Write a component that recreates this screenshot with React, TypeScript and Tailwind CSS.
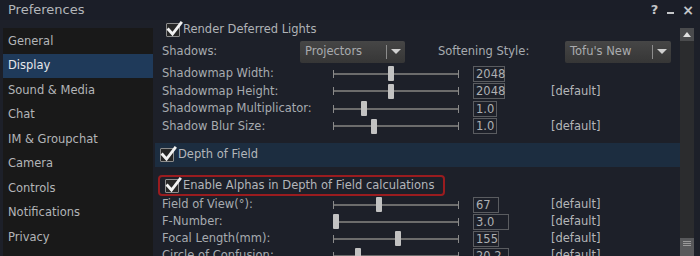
import React from "react";

const font = { fontFamily: '"DejaVu Sans", "Liberation Sans", sans-serif' };

function Check({ className = "" }: { className?: string }) {
  return (
    <span className={"relative inline-block w-[14px] h-[14px] shrink-0 " + className}>
      <span className="absolute inset-0 border border-[#8c8c8c] bg-[#262626] rounded-[1px]" />
      <svg className="absolute left-[0px] top-[-3px]" width="17" height="17" viewBox="0 0 17 17">
        <path d="M2.5 9.5 L6.5 14 L15 3" fill="none" stroke="#f2f2f2" strokeWidth="2.8" strokeLinecap="square" />
      </svg>
    </span>
  );
}

function Slider({ pos }: { pos: number }) {
  return (
    <div className="relative w-[126px] h-full flex items-center shrink-0">
      <div className="absolute left-0 right-0 h-[2px] bg-[#6c6c6c]" />
      <div className="absolute left-0 w-[1px] h-[8px] bg-[#8a8a8a]" />
      <div className="absolute right-0 w-[1px] h-[8px] bg-[#8a8a8a]" />
      <div className="absolute w-[6px] h-[15px] bg-[#c2c2c2] rounded-[1px]" style={{ left: pos }} />
    </div>
  );
}

type Row = { label: string; pos: number; value: string; w: string; def?: boolean };

function SliderRow({ r, h }: { r: Row; h: string }) {
  return (
    <div className={"flex items-center " + h}>
      <div className="w-[171px] shrink-0 text-[11.5px] text-[#a7abb0] whitespace-nowrap">{r.label}</div>
      <Slider pos={r.pos} />
      <div className={"ml-[14px] h-[16px] border border-[#5a5c60] text-[11.5px] leading-[14px] pl-[2px] text-[#aeb0b3] " + r.w}>
        {r.value}
      </div>
      {r.def ? (
        <div className="absolute left-[396px] text-[11.5px] text-[#b4b6b9]">[default]</div>
      ) : null}
    </div>
  );
}

function Dropdown({ text, w }: { text: string; w: string }) {
  return (
    <div className={"h-[22px] flex items-center bg-gradient-to-b from-[#464646] to-[#363636] rounded-[2px] shrink-0 " + w}>
      <span className="pl-[5px] flex-1 text-[11.5px] text-[#a9abae]">{text}</span>
      <span className="w-[1px] h-[14px] bg-[#8c8c8c]" />
      <svg className="mx-[4px]" width="10" height="6" viewBox="0 0 10 6">
        <path d="M0 0 L10 0 L5 5 Z" fill="#d0d0d0" />
      </svg>
    </div>
  );
}

export default function App() {
  const top: Row[] = [
    { label: "Shadowmap Width:", pos: 55, value: "2048", w: "w-[32px]" },
    { label: "Shadowmap Height:", pos: 55, value: "2048", w: "w-[32px]", def: true },
    { label: "Shadowmap Multiplicator:", pos: 28, value: "1.0", w: "w-[24px]" },
    { label: "Shadow Blur Size:", pos: 38, value: "1.0", w: "w-[24px]", def: true },
  ];
  const dof: Row[] = [
    { label: "Field of View(°):", pos: 43, value: "67", w: "w-[26px]", def: true },
    { label: "F-Number:", pos: 0, value: "3.0", w: "w-[36px]", def: true },
    { label: "Focal Length(mm):", pos: 62, value: "155", w: "w-[26px]", def: true },
    { label: "Circle of Confusion:", pos: 22, value: "20.2", w: "w-[36px]", def: true },
  ];
  const side = [
    "General",
    "Display",
    "Sound & Media",
    "Chat",
    "IM & Groupchat",
    "Camera",
    "Controls",
    "Notifications",
    "Privacy",
    "Setup",
  ];
  return (
    <div className="w-[700px] h-[256px] overflow-hidden bg-[#1d2029] flex flex-col" style={font}>
      <div className="h-[20px] shrink-0 flex items-center bg-[#1b1e28]">
        <span className="pl-[8px] text-[13px] text-[#b3b6ba]">Preferences</span>
        <span className="ml-auto text-[13px] font-bold text-[#c4c6c9]">?</span>
        <span className="ml-[9px] w-[7px] h-[2px] bg-[#c4c6c9] mt-[6px]" />
        <span className="ml-[8px] mr-[6px] text-[14px] font-bold text-[#c4c6c9] leading-none">×</span>
      </div>
      <div className="flex flex-1 min-h-0">
        <div className="w-[150px] ml-[3px] mt-[8px] bg-[#191919] shrink-0 overflow-hidden">
          <div className="pt-[1px]">
            {side.map((s) => (
              <div
                key={s}
                className={
                  "h-[24.5px] flex items-center pl-[5px] text-[11.5px] " +
                  (s === "Display" ? "bg-[#1f3a5a] text-[#e6e8eb]" : "text-[#b3b5b8]")
                }
              >
                {s}
              </div>
            ))}
          </div>
        </div>
        <div className="w-[525px] ml-[2px] shrink-0 relative overflow-hidden">
          <div className="h-[20px] flex items-center pl-[11px]">
            <Check />
            <span className="ml-[3px] text-[11.5px] text-[#b0b3b7]">Render Deferred Lights</span>
          </div>
          <div className="h-[23px] flex items-center pl-[7px]">
            <span className="w-[138px] text-[11.5px] text-[#a7abb0]">Shadows:</span>
            <Dropdown text="Projectors" w="w-[105px]" />
            <span className="ml-[33px] w-[127px] text-[11.5px] text-[#a7abb0]">Softening Style:</span>
            <Dropdown text="Tofu's New" w="w-[106px]" />
          </div>
          <div className="mt-[2px] pl-[7px] relative">
            {top.map((r) => (
              <SliderRow key={r.label} r={r} h="h-[17.5px]" />
            ))}
          </div>
          <div className="mt-[8px] h-[24px] bg-[#1c2d40] flex items-center pl-[5px]">
            <Check />
            <span className="ml-[4px] text-[11.5px] text-[#b3b6ba]">Depth of Field</span>
          </div>
          <div className="mt-[8px] h-[21px] flex items-center ml-[3px] w-[287px] border-2 border-[#9a1c1f] rounded-[4px] pl-[5px]">
            <Check />
            <span className="ml-[4px] text-[11.5px] text-[#b3b6ba] whitespace-nowrap">
              Enable Alphas in Depth of Field calculations
            </span>
          </div>
          <div className="pl-[7px] relative">
            {dof.map((r) => (
              <SliderRow key={r.label} r={r} h="h-[17px]" />
            ))}
          </div>
        </div>
        <div className="w-[14px] ml-[0px] mt-[8px] bg-[#2b2c2e] shrink-0 flex flex-col">
          <div className="h-[13px] bg-[#4a4b4d] flex items-center justify-center">
            <svg width="8" height="5" viewBox="0 0 8 5">
              <path d="M0 5 L8 5 L4 0 Z" fill="#e0e0e0" />
            </svg>
          </div>
          <div className="flex-1" />
          <div className="h-[18px] bg-[#58595b] flex flex-col items-center pt-[3px] gap-[1px]">
            <div className="w-[8px] h-[1px] bg-[#9a9a9a]" />
            <div className="w-[8px] h-[1px] bg-[#9a9a9a]" />
            <div className="w-[8px] h-[1px] bg-[#9a9a9a]" />
          </div>
        </div>
      </div>
    </div>
  );
}
